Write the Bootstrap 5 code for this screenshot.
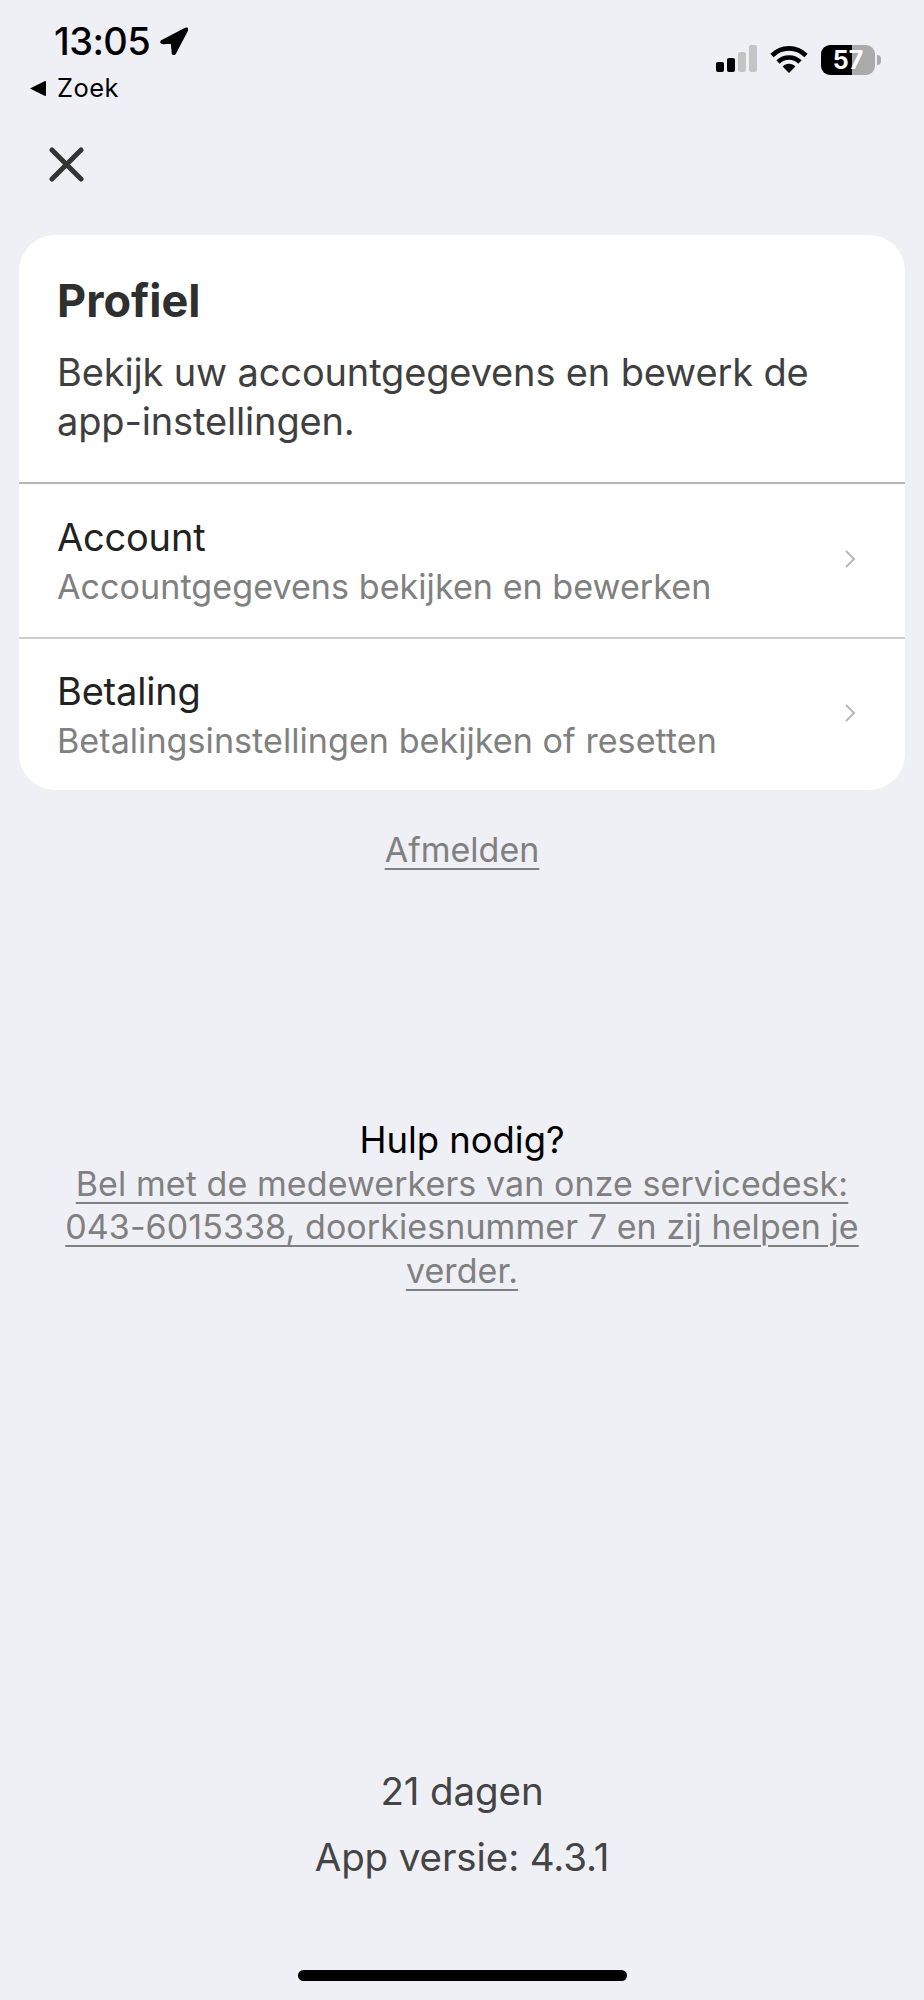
<!DOCTYPE html>
<html lang="nl">

<head>
    <meta charset="UTF-8">
    <meta name="viewport" content="width=device-width, initial-scale=1">
    <title>Profiel</title>
    <link href="https://cdn.jsdelivr.net/npm/bootstrap@5.3.0/dist/css/bootstrap.min.css" rel="stylesheet">
    <style>
        body { background: #eff0f5; font-family: Inter, "Liberation Sans", sans-serif; height: 2000px; overflow: hidden; }
        .screen { height: 2000px; }
        .status-bar { height: 112px; padding: 20px 43px 0 29px; }
        .clock-row { padding-left: 25px; height: 42px; gap: 10px; }
        .clock { font-size: 38px; line-height: 42px; font-weight: 500; color: #000; letter-spacing: -0.6px; }
        .back-row { margin-top: 11px; height: 30px; gap: 10px; }
        .back-label { font-size: 25.5px; line-height: 30px; color: #000; letter-spacing: .4px; }
        .status-icons { padding-top: 25px; gap: 13px; }
        .battery { width: 54px; height: 30px; border-radius: 9px; background: linear-gradient(90deg, #000 31px, #aaa 31px); color: #fff; font-size: 25px; font-weight: 700; line-height: 30px; }
        .battery-nub { width: 4px; height: 10px; margin-left: 2px; background: #aaa; border-radius: 0 4px 4px 0; }
        .close-row { padding: 35px 0 0 49px; height: 123px; }
        .profile-card { margin: 0 19px; background: #fff; border-radius: 36px; overflow: hidden; }
        .card-top { padding: 39px 38px 0; height: 249px; border-bottom: 2px solid #b5b5b5; }
        .card-heading { font-size: 45px; line-height: 54px; font-weight: 700; color: #2f2f2f; margin: 0 0 20px; }
        .card-text { font-size: 38px; line-height: 49px; color: #3f3f3f; letter-spacing: -0.15px; margin: 0; }
        .menu-row { height: 153px; padding: 4px 49px 0 38px; }
        .menu-row + .menu-row { border-top: 2px solid #cfcfcf; }
        .menu-row svg { margin-bottom: 7px; }
        .menu-title { font-size: 38px; line-height: 48px; color: #222; letter-spacing: -0.2px; }
        .menu-sub { font-size: 34.1px; line-height: 52px; color: #808080; letter-spacing: 0.05px; }
        .logout { margin-top: 38px; font-size: 34px; line-height: 44px; color: #808080; }
        .logout a, .help-text { color: #808080; text-decoration: underline; text-underline-offset: 6px; text-decoration-thickness: 2px; }
        .help-block { margin-top: 246px; }
        .help-title { font-size: 36.4px; line-height: 44px; color: #000; }
        .help-text { display: block; font-size: 34px; line-height: 43.4px; letter-spacing: 0.08px; padding: 0 50px; }
        .version-block { margin-top: 466px; color: #444; font-size: 38.5px; line-height: 66px; letter-spacing: -0.1px; }
        .home-bar { width: 329px; height: 11px; background: #000; border-radius: 6px; margin: 80px auto 0; }
    </style>
</head>

<body>
    <div class="screen d-flex flex-column">
        <!-- statusbalk -->
        <div class="status-bar d-flex justify-content-between">
            <div>
                <div class="clock-row d-flex align-items-center">
                    <span class="clock">13:05</span>
                    <svg width="28" height="28" viewBox="0 0 28 28"><path d="M1.5 14 L25.5 1.5 Q28 .5 27.5 3 L15.5 26 Q14 28.5 12.5 26.5 L11.5 16 L3 16.5 Q0 16 1.5 14 Z" fill="#000" stroke="#000" stroke-width="1.5" stroke-linejoin="round"/></svg>
                </div>
                <div class="back-row d-flex align-items-center">
                    <svg width="18" height="17" viewBox="0 0 18 17"><path d="M1 8.5 L16 1 Q17 .8 17 2 V15 Q17 16.2 16 16 Z" fill="#000"/></svg>
                    <span class="back-label">Zoek</span>
                </div>
            </div>
            <div class="status-icons d-flex align-items-start">
                <svg width="41" height="28" viewBox="0 0 41 28">
                    <rect x="0" y="17" width="8" height="10" rx="2" fill="#000"/>
                    <rect x="11" y="13" width="8" height="14" rx="2" fill="#000"/>
                    <rect x="22" y="7" width="8" height="20" rx="2" fill="#c4c4c4"/>
                    <rect x="33" y="0" width="8" height="27" rx="2" fill="#c4c4c4"/>
                </svg>
                <svg width="38" height="28" viewBox="0 0 38 28" fill="none" stroke="#000" stroke-width="4.6">
                    <path d="M2 10.5 C11.5 1 26.5 1 36 10.5"/>
                    <path d="M8 17 C14 11 24 11 30 17"/>
                    <path d="M19 28 L12.6 21.4 C16 18 22 18 25.4 21.4 Z" fill="#000" stroke="none"/>
                </svg>
                <div class="d-flex align-items-center">
                    <div class="battery text-center">57</div>
                    <div class="battery-nub"></div>
                </div>
            </div>
        </div>

        <div class="close-row">
            <svg width="35" height="35" viewBox="0 0 35 35" fill="none" stroke="#333" stroke-width="5" stroke-linecap="round"><path d="M3 3 L32 32 M32 3 L3 32"/></svg>
        </div>

        <!-- profiel -->
        <div class="profile-card">
            <div class="card-top">
                <h1 class="card-heading">Profiel</h1>
                <p class="card-text">Bekijk uw accountgegevens en bewerk de app-instellingen.</p>
            </div>
            <div class="menu-row d-flex justify-content-between align-items-center">
                <div>
                    <div class="menu-title">Account</div>
                    <div class="menu-sub">Accountgegevens bekijken en bewerken</div>
                </div>
                <svg width="12" height="20" viewBox="0 0 12 20" fill="none" stroke="#b9b9b9" stroke-width="2"><path d="M2 2 L10 10 L2 18"/></svg>
            </div>
            <div class="menu-row d-flex justify-content-between align-items-center">
                <div>
                    <div class="menu-title">Betaling</div>
                    <div class="menu-sub">Betalingsinstellingen bekijken of resetten</div>
                </div>
                <svg width="12" height="20" viewBox="0 0 12 20" fill="none" stroke="#b9b9b9" stroke-width="2"><path d="M2 2 L10 10 L2 18"/></svg>
            </div>
        </div>

        <div class="logout text-center"><a href="#">Afmelden</a></div>

        <div class="help-block text-center">
            <div class="help-title">Hulp nodig?</div>
            <a class="help-text" href="#">Bel met de medewerkers van onze servicedesk: 043-6015338, doorkiesnummer 7 en zij helpen je verder.</a>
        </div>

        <div class="version-block text-center">
            <div>21 dagen</div>
            <div>App versie: 4.3.1</div>
        </div>

        <div class="home-bar"></div>
    </div>

    <script src="https://cdn.jsdelivr.net/npm/bootstrap@5.3.0/dist/js/bootstrap.bundle.min.js"></script>
</body>

</html>
